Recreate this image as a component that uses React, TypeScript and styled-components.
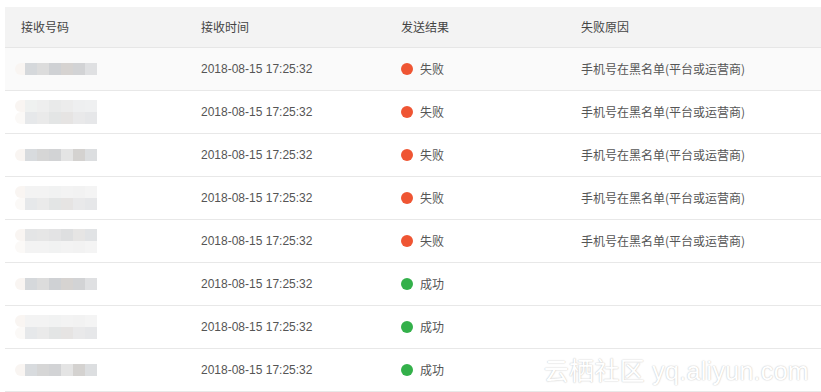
import React from "react";
import styled, { createGlobalStyle } from "styled-components";

const Global = createGlobalStyle`
  html, body { margin: 0; padding: 0; background: #ffffff; }
  body { font-family: "Liberation Sans", "Noto Sans CJK SC", Arial, sans-serif; overflow: hidden; }
`;

const Page = styled.div`
  position: relative;
  width: 821px;
  height: 392px;
  padding: 7px 0 0 5px;
  box-sizing: border-box;
  overflow: hidden;
`;

const Table = styled.div`
  display: flex;
  flex-direction: column;
  width: 816px;
`;

const cols = "180px 200px 180px 1fr";

const HeaderRow = styled.div`
  display: grid;
  grid-template-columns: ${cols};
  height: 40px;
  align-items: center;
  background: #f3f3f3;
  border-bottom: 1px solid #e6e6e6;
`;

const HeadCell = styled.div`
  padding-left: 16px;
  font-size: 12px;
  color: #444;
  font-family: "Noto Sans CJK SC", "Liberation Sans", sans-serif;
  line-height: 16px;
  margin-top: -1px;
`;

const Row = styled.div<{ $hover?: boolean }>`
  display: grid;
  grid-template-columns: ${cols};
  height: 42px;
  align-items: center;
  background: ${(p) => (p.$hover ? "#fafafa" : "#ffffff")};
  border-bottom: 1px solid #e8e8e8;
`;

const Cell = styled.div<{ $tight?: boolean }>`
  padding-left: ${(p) => (p.$tight ? "6px" : "16px")};
  font-size: 12px;
  color: #555;
  display: flex;
  align-items: center;
  font-family: "Liberation Sans", "Noto Sans CJK SC", sans-serif;
`;

const CnText = styled.span`
  font-family: "Noto Sans CJK SC", "Liberation Sans", sans-serif;
  font-size: 12px;
  line-height: 16px;
  color: #555;
  margin-top: -1px;
`;

const Dot = styled.span<{ $ok: boolean }>`
  width: 12px;
  height: 12px;
  border-radius: 50%;
  background: ${(p) => (p.$ok ? "#33b04a" : "#ef5533")};
  margin-right: 7px;
`;

const Blur = styled.div`
  display: flex;
  flex-direction: column;
  margin-left: 4px;
  filter: blur(0.3px);
`;

const BlurLine = styled.div`
  display: flex;
`;

const Pixel = styled.span<{ $c: string }>`
  width: 12px;
  height: 12px;
  background: ${(p) => p.$c};
`;

const Fade = styled.span<{ $c: string }>`
  width: 10px;
  height: 12px;
  border-radius: 6px 0 0 6px;
  background: ${(p) => p.$c};
`;

const Watermark = styled.div`
  position: absolute;
  right: 12px;
  bottom: 5px;
  font-family: "Liberation Sans", "Noto Sans CJK SC", sans-serif;
  font-size: 25px;
  color: #ffffff;
  letter-spacing: 0.3px;
  text-shadow: 0 0 1px #c4c4c4, 0 0 2px #d8d8d8;
`;

type Line = string[];
const dark1: Line = ["#d5d8db", "#dcdcdc", "#cfd1d4", "#d6d3d1", "#d2d3d5", "#dfe0e2"];
const dark2: Line = ["#d8dbde", "#d6d6d6", "#d2d3d5", "#e4e4e4", "#d4d2d0", "#dcdee0"];
const light1: Line = ["#eff1f0", "#eeeeee", "#e9eaea", "#ececec", "#eeeff0", "#eff0f1"];
const light2: Line = ["#e6e8ea", "#eaeaea", "#e3e5e5", "#e6e4e3", "#e9e9ea", "#e6e7e9"];
const light3: Line = ["#e4e5e6", "#e6e6e6", "#e3e3e4", "#dedfe0", "#e6e5e4", "#e1e3e5"];
const light4: Line = ["#f3f3f3", "#f3f3f3", "#f1f2f2", "#f3f3f3", "#f2f2f2", "#f4f4f4"];

const blurs: Line[][] = [
  [dark1],
  [light1, light2],
  [dark2],
  [light4, light2],
  [light3, light4],
  [dark1],
  [light4, light2],
  [dark2],
];

const rows = [false, false, false, false, false, true, true, true];

function Masked({ lines }: { lines: Line[] }) {
  return (
    <Blur>
      {lines.map((l, i) => (
        <BlurLine key={i}>
          <Fade $c={i === 0 ? "#f9f5f2" : "#fbf9f7"} />
          {l.map((c, j) => (
            <Pixel key={j} $c={c} />
          ))}
        </BlurLine>
      ))}
    </Blur>
  );
}

export default function App() {
  return (
    <Page>
      <Global />
      <Table>
        <HeaderRow>
          <HeadCell>接收号码</HeadCell>
          <HeadCell>接收时间</HeadCell>
          <HeadCell>发送结果</HeadCell>
          <HeadCell>失败原因</HeadCell>
        </HeaderRow>
        {rows.map((ok, i) => (
          <Row key={i} $hover={i === 0}>
            <Cell $tight>
              <Masked lines={blurs[i]} />
            </Cell>
            <Cell>2018-08-15 17:25:32</Cell>
            <Cell>
              <Dot $ok={ok} />
              <CnText>{ok ? "成功" : "失败"}</CnText>
            </Cell>
            <Cell>{ok ? null : <CnText>手机号在黑名单(平台或运营商)</CnText>}</Cell>
          </Row>
        ))}
      </Table>
      <Watermark>云栖社区 yq.aliyun.com</Watermark>
    </Page>
  );
}
